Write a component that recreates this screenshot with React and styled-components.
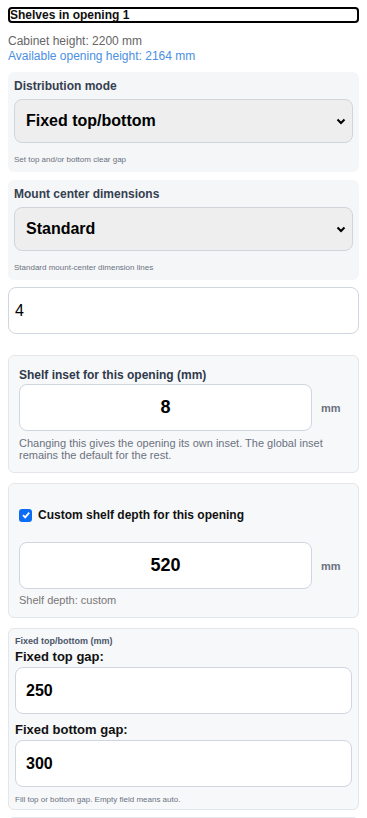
import React from "react";
import styled, { createGlobalStyle } from "styled-components";

const Global = createGlobalStyle`
  body {
    margin: 0;
    padding: 7px 8px 8px 8px;
    font-family: "Liberation Sans", Arial, sans-serif;
    background: #fff;
    color: #111;
  }
  * { box-sizing: border-box; }
`;

const Titulo = styled.div`
  border: 2px solid #000;
  border-radius: 4px;
  font-size: 12px;
  font-weight: 700;
  line-height: 12px;
  color: #111;
`;

const Info = styled.div`
  font-size: 12px;
  line-height: 15px;
  color: ${props => props.cor || '#666'};
`;

const InfoBloco = styled.div`
  margin-top: 11px;
  margin-bottom: 8px;
`;

const Painel = styled.section`
  background: ${props => props.fundo || '#f5f6f8'};
  border: ${props => props.borda ? '1px solid #e3e6ea' : 'none'};
  border-radius: 6px;
  padding: ${props => props.padding || '6px'};
  margin-top: ${props => props.topo || '8px'};
`;

const Rotulo = styled.div`
  font-size: ${props => props.tamanho || '12px'};
  font-weight: 700;
  color: ${props => props.cor || '#34404f'};
  line-height: ${props => props.altura || '16px'};
  margin-bottom: ${props => props.abaixo || '5px'};
  margin-top: ${props => props.acima || '0'};
`;

const Seletor = styled.div`
  height: 44px;
  background: #eeeeee;
  border: 1px solid #d0d5dc;
  border-radius: 8px;
  display: flex;
  align-items: center;
  justify-content: space-between;
  padding: 0 5px 0 11px;
  font-size: 16px;
  font-weight: 700;
  color: #000;
`;

const Dica = styled.div`
  font-size: ${props => props.tamanho || '8px'};
  color: ${props => props.cor || '#6b7280'};
  line-height: ${props => props.altura || '12px'};
  margin-top: ${props => props.topo || '11px'};
`;

const Campo = styled.div`
  height: 47px;
  background: #fff;
  border: 1px solid #cfd6df;
  border-radius: 8px;
  display: flex;
  align-items: center;
  justify-content: ${props => props.centro ? 'center' : 'flex-start'};
  padding: 0 ${props => props.recuo || '6px'};
  font-size: ${props => props.tamanho || '16px'};
  font-weight: ${props => props.peso || '400'};
  color: #000;
  flex: 1;
`;

const LinhaCampo = styled.div`
  display: flex;
  align-items: center;
  margin-top: ${props => props.topo || '0'};
`;

const Unidade = styled.span`
  width: 36px;
  padding-left: 9px;
  font-size: 11px;
  font-weight: 700;
  color: #6b7280;
`;

const LinhaCheck = styled.label`
  display: flex;
  align-items: center;
  gap: 6px;
  font-size: 12px;
  font-weight: 700;
  color: #111;
  margin: 24px 0 20px 0;
`;

const Caixa = styled.span`
  width: 13px;
  height: 13px;
  border-radius: 3px;
  background: #0b6cf5;
  display: flex;
  align-items: center;
  justify-content: center;
`;

function Seta() {
  return (
    <svg width="12" height="12" viewBox="0 0 12 12">
      <path d="M2.5 4.5 L6 8 L9.5 4.5" stroke="#000" strokeWidth="2" fill="none" />
    </svg>
  );
}

export default function App() {
  return (
    <>
      <Global />
      <Titulo>Shelves in opening 1</Titulo>
      <InfoBloco>
        <Info>Cabinet height: 2200 mm</Info>
        <Info cor="#4a90e2">Available opening height: 2164 mm</Info>
      </InfoBloco>

      <Painel topo="0">
        <Rotulo>Distribution mode</Rotulo>
        <Seletor>Fixed top/bottom<Seta /></Seletor>
        <Dica>Set top and/or bottom clear gap</Dica>
      </Painel>

      <Painel>
        <Rotulo>Mount center dimensions</Rotulo>
        <Seletor>Standard<Seta /></Seletor>
        <Dica>Standard mount-center dimension lines</Dica>
      </Painel>

      <LinhaCampo topo="7px">
        <Campo>4</Campo>
      </LinhaCampo>

      <Painel borda padding="10px 10px 11px 10px" topo="21px" fundo="#f7f8fa">
        <Rotulo cor="#2f3a4a" abaixo="0" altura="18px">Shelf inset for this opening (mm)</Rotulo>
        <LinhaCampo>
          <Campo centro tamanho="18px" peso="700">8</Campo>
          <Unidade>mm</Unidade>
        </LinhaCampo>
        <Dica tamanho="11px" altura="12px" topo="6px" cor="#6b7280">
          Changing this gives the opening its own inset. The global inset remains the default for the rest.
        </Dica>
      </Painel>

      <Painel borda padding="0 10px 11px 10px" topo="10px" fundo="#f7f8fa">
        <LinhaCheck>
          <Caixa>
            <svg width="10" height="10" viewBox="0 0 10 10">
              <path d="M2 5.2 L4.2 7.4 L8.2 2.6" stroke="#fff" strokeWidth="1.8" fill="none" />
            </svg>
          </Caixa>
          Custom shelf depth for this opening
        </LinhaCheck>
        <LinhaCampo>
          <Campo centro tamanho="18px" peso="700">520</Campo>
          <Unidade>mm</Unidade>
        </LinhaCampo>
        <Dica tamanho="11px" altura="12px" topo="5px" cor="#777">Shelf depth: custom</Dica>
      </Painel>

      <Painel borda padding="6px 6px 3px 6px" topo="10px" fundo="#f7f8fa">
        <Rotulo tamanho="9px" cor="#4a5568" altura="12px" abaixo="0">Fixed top/bottom (mm)</Rotulo>
        <Rotulo tamanho="13px" cor="#111" altura="20px" abaixo="0">Fixed top gap:</Rotulo>
        <Campo recuo="10px" peso="700">250</Campo>
        <Rotulo tamanho="13px" cor="#111" altura="20px" abaixo="0" acima="6px">Fixed bottom gap:</Rotulo>
        <Campo recuo="10px" peso="700">300</Campo>
        <Dica topo="7px">Fill top or bottom gap. Empty field means auto.</Dica>
      </Painel>

      <Painel borda topo="7px" fundo="#f0f6ff" style={{ height: 40 }} />
    </>
  );
}
